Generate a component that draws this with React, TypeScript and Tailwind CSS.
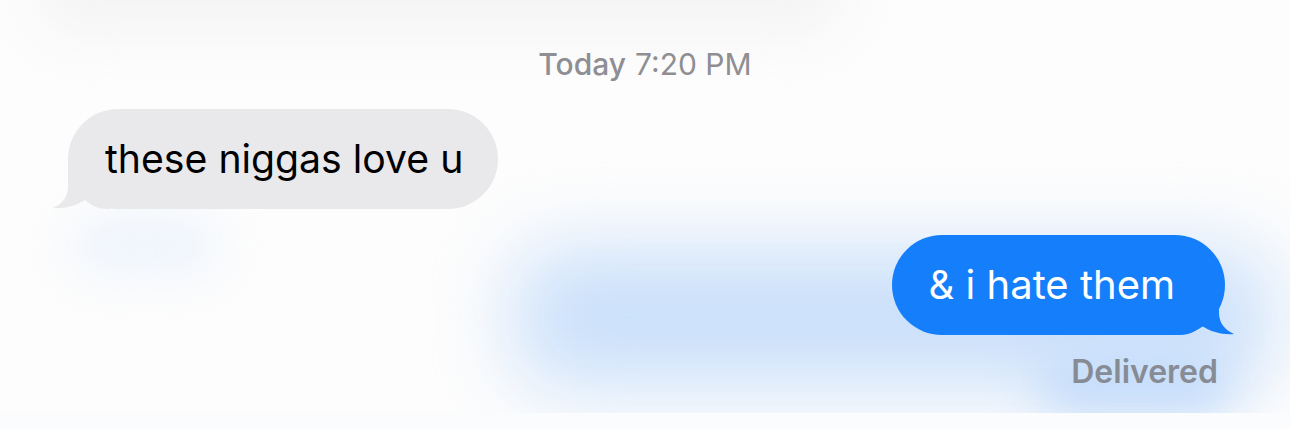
const GRAY = "#e9e9eb";
const BLUE = "#147efb";

function Tail({ color, flip }: { color: string; flip?: boolean }) {
  return (
    <svg
      viewBox="0 0 60 50"
      width={60}
      height={50}
      className={
        flip
          ? "absolute -right-[12px] bottom-0 -scale-x-100"
          : "absolute -left-[18px] bottom-0"
      }
    >
      <path
        d="M18 0 L18 28 C18 38 12 45 3 49 C14 50 26 47 35 41 C40 45 46 50 58 50 L60 50 L60 0 Z"
        fill={color}
      />
    </svg>
  );
}

export default function App() {
  return (
    <main
      className="relative w-[1290px] h-[429px] overflow-hidden bg-[#fdfdfd]"
      style={{ fontFamily: "Inter, 'Noto Sans', sans-serif" }}
    >
      {/* blurred background smudges */}
      <div className="absolute left-[30px] top-[-55px] w-[820px] h-[95px] rounded-full bg-[#f5f5f5] blur-xl" />
      <div className="absolute left-[70px] top-[215px] w-[150px] h-[60px] rounded-full bg-[#eef4fc] blur-xl" />
      <div className="absolute left-[515px] top-[250px] w-[755px] h-[135px] rounded-[40px] bg-[#c9dffa] blur-2xl" />
      <div className="absolute left-[1040px] top-[360px] w-[190px] h-[50px] rounded-[20px] bg-[#bfd9fa] blur-xl" />
      <div className="absolute left-0 top-[413px] w-[1290px] h-[16px] bg-[#fbfcfe]" />

      <div className="relative flex flex-col pt-[48px]">
        <div className="flex justify-center text-[30px] leading-[32px] text-[#8e8e93]">
          <span className="font-medium mr-[9px]">Today</span>
          <span>7:20 PM</span>
        </div>

        <div className="flex mt-[29px] pl-[68px]">
          <div
            className="relative h-[100px] rounded-[50px] pl-[37px] pr-[35px] flex items-center"
            style={{ backgroundColor: GRAY }}
          >
            <Tail color={GRAY} />
            <span className="relative text-[39.2px] text-black">
              these niggas love u
            </span>
          </div>
        </div>

        <div className="flex justify-end mt-[26px] pr-[65px]">
          <div
            className="relative h-[100px] rounded-[50px] pl-[37px] pr-[50px] flex items-center"
            style={{ backgroundColor: BLUE }}
          >
            <Tail color={BLUE} flip />
            <span className="relative text-[40px] text-white">
              &amp; i hate them
            </span>
          </div>
        </div>

        <div className="flex justify-end pr-[72px] mt-[13px]">
          <span className="text-[32px] font-semibold text-[#878b94]">
            Delivered
          </span>
        </div>
      </div>
    </main>
  );
}
